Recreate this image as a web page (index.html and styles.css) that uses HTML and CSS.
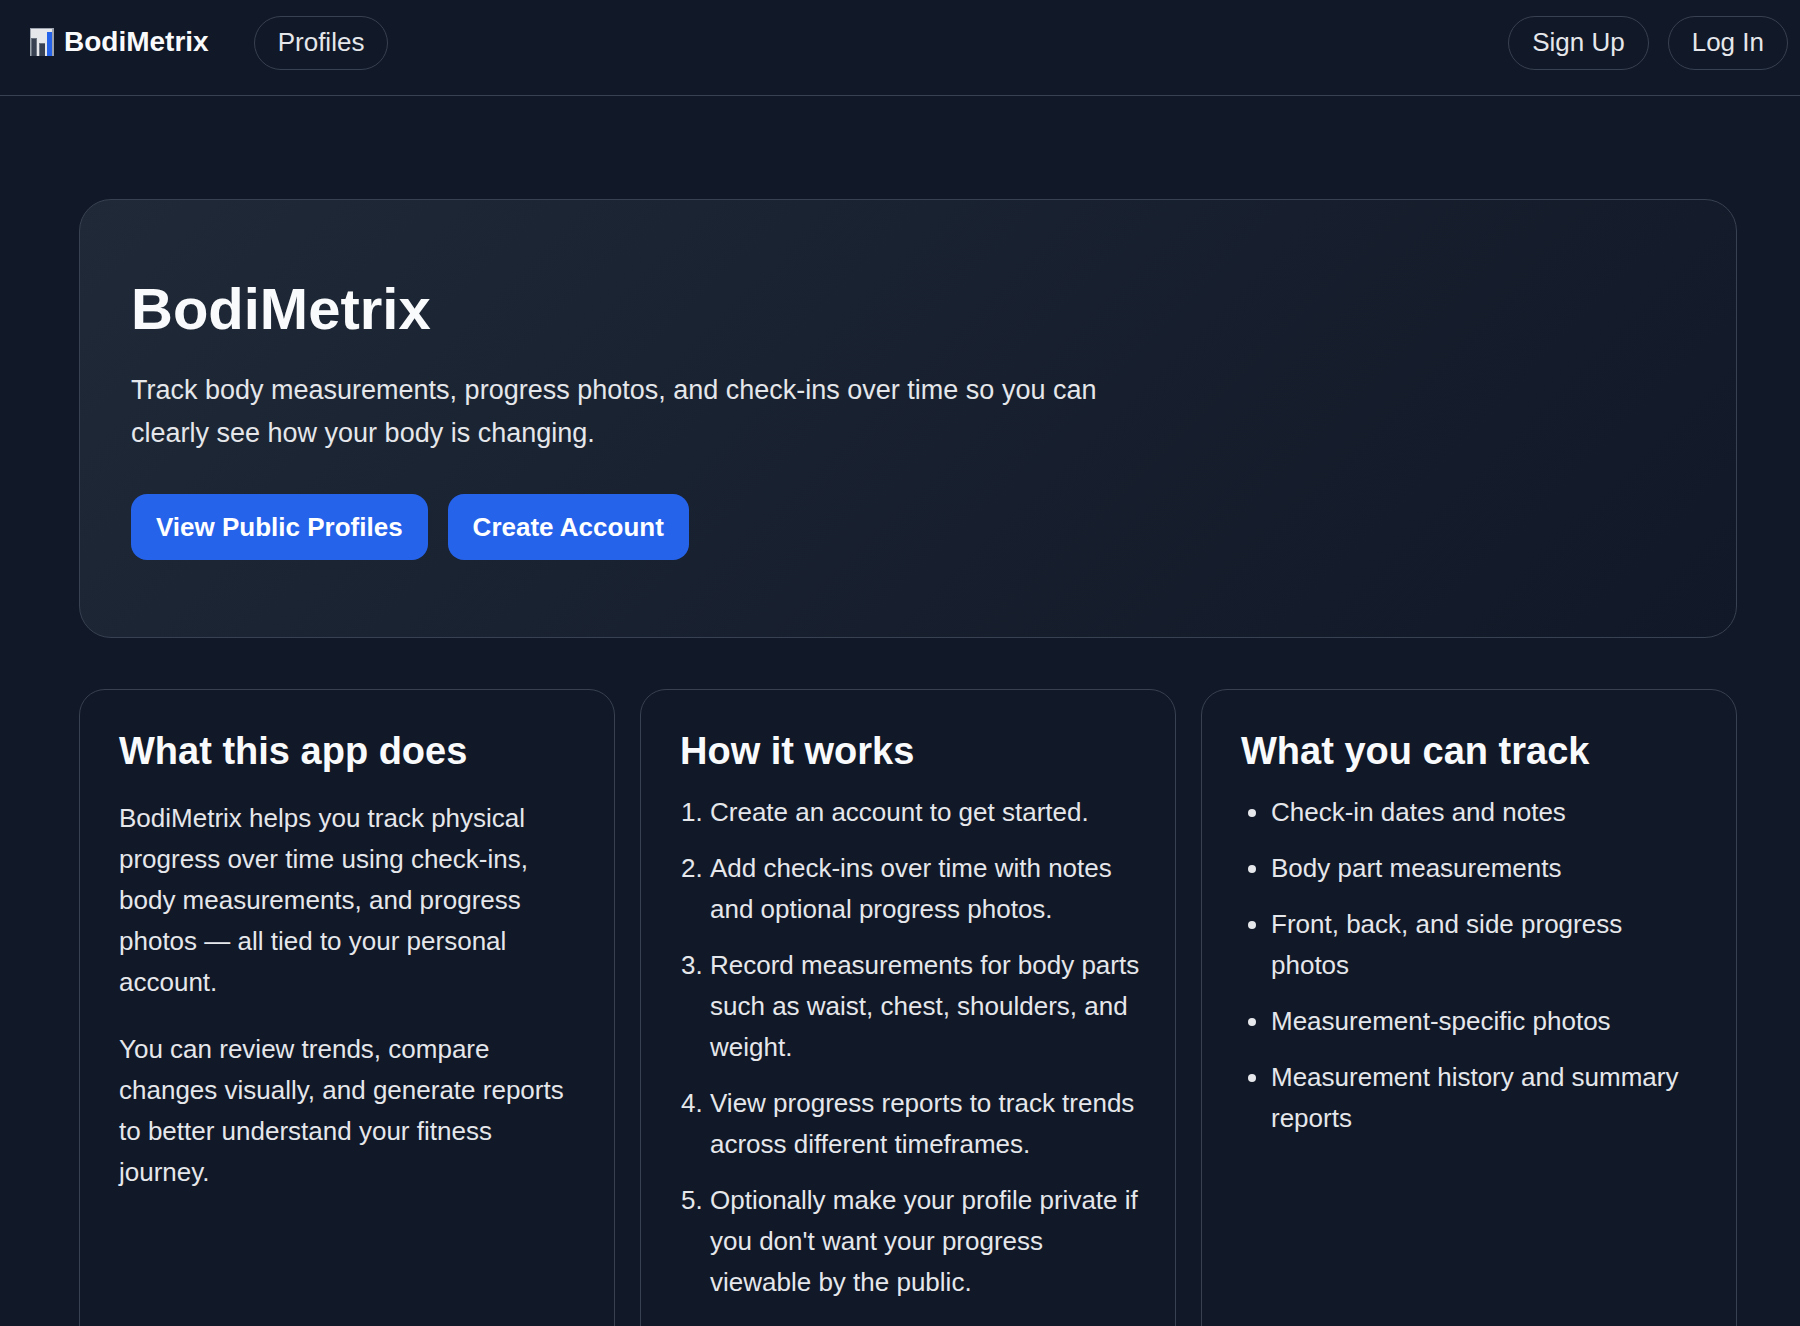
FILE: index.html
```html
<!DOCTYPE html>
<html lang="en">
  <head>
    <meta charset="UTF-8" />
    <meta name="viewport" content="width=device-width, initial-scale=1.0" />
    <title>BodiMetrix</title>
    <link rel="stylesheet" href="styles.css">
  </head>

  <body>
    <header class="topbar">
      <a href="#" class="logo">
        <svg width="24" height="28" viewBox="0 0 24 28" aria-hidden="true">
          <rect width="24" height="28" fill="#9ca3af" />
          <rect x="1" y="1" width="21" height="27" fill="#e5e7eb" />
          <rect x="1" y="10" width="6" height="18" fill="#6b7280" />
          <rect x="2" y="11" width="4" height="17" fill="#374151" />
          <rect x="9" y="15" width="6" height="13" fill="#6b7280" />
          <rect x="10" y="16" width="5" height="12" fill="#374151" />
          <rect x="17" y="4" width="5" height="24" fill="#2563eb" />
        </svg>
        <span>BodiMetrix</span>
      </a>
      <nav class="nav-links">
        <a href="#" class="pill">Profiles</a>
      </nav>
      <nav class="nav-auth">
        <a href="#" class="pill">Sign Up</a>
        <a href="#" class="pill">Log In</a>
      </nav>
    </header>

    <main>
      <section class="hero">
        <h1>BodiMetrix</h1>
        <p>
          Track body measurements, progress photos, and check-ins over time so
          you can clearly see how your body is changing.
        </p>
        <div class="hero-actions">
          <a href="#" class="btn">View Public Profiles</a>
          <a href="#" class="btn">Create Account</a>
        </div>
      </section>

      <section class="cards">
        <article class="card">
          <h2>What this app does</h2>
          <p>
            BodiMetrix helps you track physical progress over time using
            check-ins, body measurements, and progress photos — all tied to
            your personal account.
          </p>
          <p>
            You can review trends, compare changes visually, and generate
            reports to better understand your fitness journey.
          </p>
        </article>

        <article class="card">
          <h2>How it works</h2>
          <ol>
            <li>Create an account to get started.</li>
            <li>Add check-ins over time with notes and optional progress photos.</li>
            <li>
              Record measurements for body parts such as waist, chest,
              shoulders, and weight.
            </li>
            <li>View progress reports to track trends across different timeframes.</li>
            <li>
              Optionally make your profile private if you don't want your
              progress viewable by the public.
            </li>
          </ol>
        </article>

        <article class="card">
          <h2>What you can track</h2>
          <ul>
            <li>Check-in dates and notes</li>
            <li>Body part measurements</li>
            <li>Front, back, and side progress photos</li>
            <li>Measurement-specific photos</li>
            <li>Measurement history and summary reports</li>
          </ul>
        </article>
      </section>
    </main>
  </body>
</html>
```

FILE: styles.css
```css
* {
  box-sizing: border-box;
  margin: 0;
}

:root {
  --bg: #111827;
  --panel: #1f2937;
  --line: #374151;
  --text: #e5e7eb;
  --white: #f9fafb;
  --blue: #2563eb;
}

body {
  background-color: var(--bg);
  color: var(--text);
  font-family: Arial, "Liberation Sans", Helvetica, sans-serif;
  font-size: 26px;
  line-height: 41px;
}

a {
  color: inherit;
  text-decoration: none;
}

.topbar {
  display: flex;
  align-items: flex-start;
  padding: 16px 12px 25px 30px;
  border-bottom: 1px solid var(--line);
}

.logo {
  display: flex;
  align-items: center;
  gap: 10px;
  margin-right: 45px;
  color: var(--white);
  font-size: 28px;
  font-weight: bold;
  line-height: 52px;
}

.nav-auth {
  display: flex;
  gap: 19px;
  margin-left: auto;
}

.pill {
  display: block;
  padding: 10px 23px 12px;
  border: 1px solid var(--line);
  border-radius: 27px;
  line-height: 30px;
}

main {
  padding: 103px 63px 51px 79px;
}

.hero {
  padding: 77px 51px;
  border: 1px solid var(--line);
  border-radius: 32px;
  background: linear-gradient(135deg, var(--panel), var(--bg));
}

.hero h1 {
  margin-bottom: 28px;
  color: var(--white);
  font-size: 58px;
  line-height: 64px;
}

.hero p {
  max-width: 1024px;
  font-size: 27px;
  line-height: 43px;
}

.hero-actions {
  display: flex;
  flex-wrap: wrap;
  gap: 20px;
  margin-top: 39px;
}

.btn {
  padding: 18px 25px;
  border-radius: 16px;
  background-color: var(--blue);
  color: white;
  font-weight: bold;
  line-height: 30px;
}

.cards {
  display: grid;
  grid-template-columns: repeat(3, 1fr);
  gap: 25px;
  margin-top: 51px;
}

.card {
  padding: 40px 35px 40px 39px;
  border: 1px solid var(--line);
  border-radius: 26px;
}

.card h2 {
  margin-bottom: 20px;
  color: var(--white);
  font-size: 38px;
  line-height: 42px;
}

.card p {
  margin: 26px 0;
}

.card ol,
.card ul {
  padding-left: 30px;
}

.card li {
  margin-bottom: 15px;
}
```
